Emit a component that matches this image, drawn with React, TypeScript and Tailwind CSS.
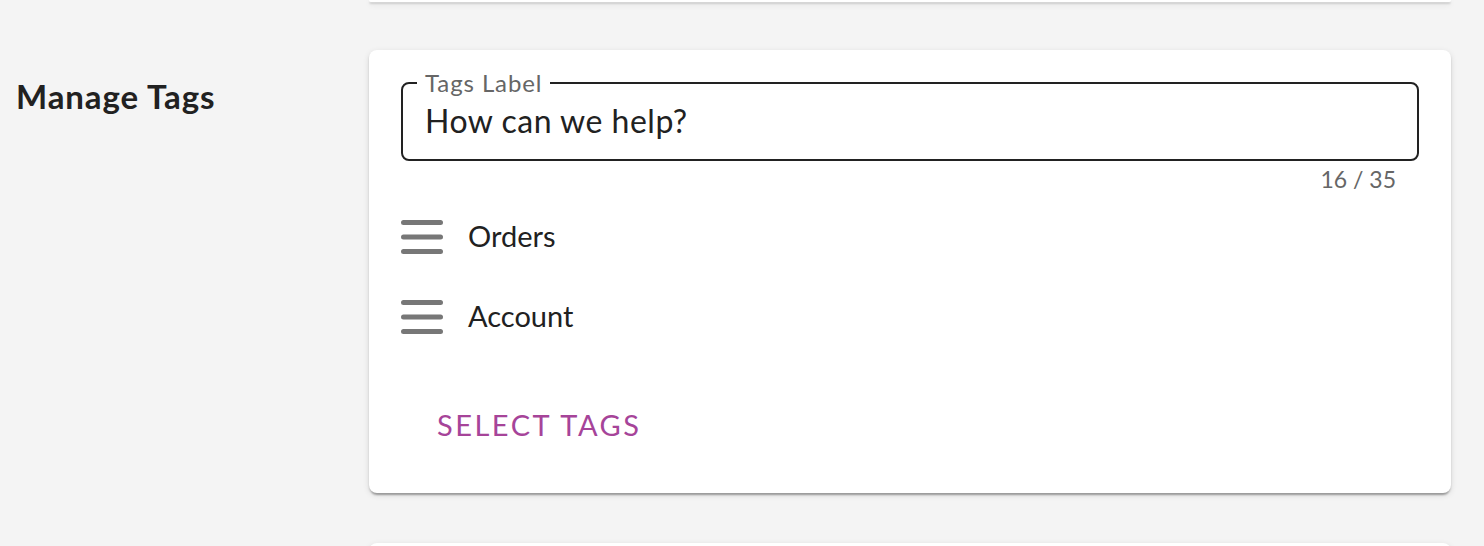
const tags = ["Orders", "Account"];

const cardShadow =
  "bg-white rounded-lg shadow-[0_4px_2px_-2px_rgba(0,0,0,0.2),0_2px_2px_0_rgba(0,0,0,0.14),0_2px_6px_0_rgba(0,0,0,0.12)]";

const DragIcon = () => (
  <svg width="42" height="40" viewBox="0 0 42 40" className="shrink-0">
    <g stroke="#777777" strokeWidth="5" strokeLinecap="round">
      <line x1="2.5" y1="5.5" x2="39.5" y2="5.5" />
      <line x1="2.5" y1="20" x2="39.5" y2="20" />
      <line x1="2.5" y1="34.5" x2="39.5" y2="34.5" />
    </g>
  </svg>
);

const App = () => {
  return (
    <div className="h-screen bg-[#f4f4f4] font-['Lato',sans-serif] text-[#212121] overflow-hidden">
      <div className="flex flex-col pl-[16px] pr-[33px]">
        {/* tail of the card above */}
        <div className="flex">
          <div className="w-[353px] shrink-0" />
          <div className={`flex-1 h-[2px] rounded-t-none ${cardShadow}`} />
        </div>

        <div className="flex mt-[48px]">
          <div className="w-[353px] shrink-0 pt-[26px]">
            <h2 className="text-[33px] leading-[40px] font-bold tracking-[0.9px]">Manage Tags</h2>
          </div>

          <div className={`flex-1 px-[32px] pt-[32px] pb-[32px] ${cardShadow}`}>
            {/* Tags label field */}
            <div className="relative h-[79px] border-2 border-[#222222] rounded-lg flex items-center pl-[22px]">
              <span className="absolute left-[14px] -top-[15px] bg-white px-[8px] text-[24px] leading-[28px] tracking-[0.9px] text-[#666666]">
                Tags Label
              </span>
              <span className="text-[32px] leading-[40px] tracking-[0.5px] -mt-[1px]">How can we help?</span>
            </div>
            <div className="mt-[3px] pr-[23px] text-right text-[23px] leading-[30px] text-[#666666]">
              16 / 35
            </div>

            {/* tag list */}
            <div className="mt-[3px] flex flex-col">
              {tags.map((t) => (
                <div key={t} className="h-[80px] flex items-center gap-[25px]">
                  <DragIcon />
                  <span className="text-[29px] leading-[40px] -mt-[2px]">{t}</span>
                </div>
              ))}
            </div>

            <button
              type="button"
              className="mt-[32px] ml-[20px] h-[72px] px-[16px] text-[29px] uppercase tracking-[2.5px] text-[#a64499]"
            >
              Select Tags
            </button>
          </div>
        </div>

        {/* head of the card below */}
        <div className="flex mt-[50px]">
          <div className="w-[353px] shrink-0" />
          <div className={`flex-1 h-[40px] ${cardShadow}`} />
        </div>
      </div>
    </div>
  );
};

export default App;
